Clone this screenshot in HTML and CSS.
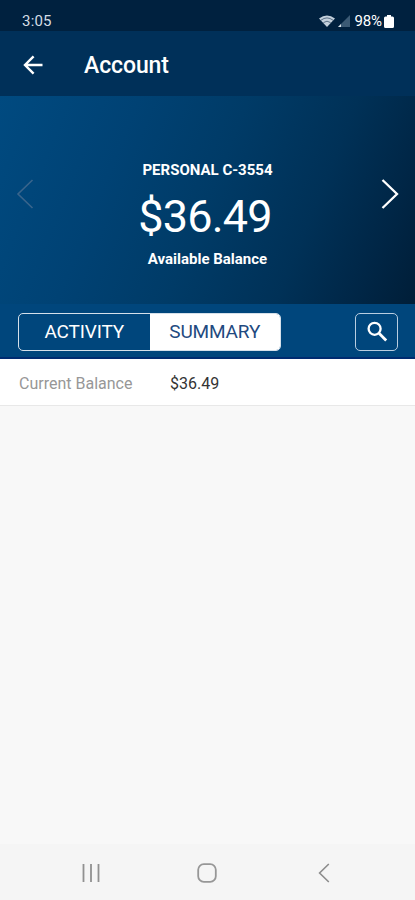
FILE: index.html
```html
<!DOCTYPE html>
<html lang="en">
<head>
  <meta charset="UTF-8" />
  <meta name="viewport" content="width=device-width, initial-scale=1.0"/>
  <title>Account</title>
  <link rel="stylesheet" href="styles.css">
</head>
<body>

<div class="status-bar">
  <span class="time">3:05</span>
  <div class="status-icons">
    <svg class="wifi" width="16" height="12" viewBox="0 0 16 12">
      <path d="M0 3.6 Q8 -2.8 16 3.6 L8 12 Z" fill="#c3d0dc"/>
      <path d="M2 5.2 Q8 0.6 14 5.2 M4.4 7.6 Q8 4.8 11.6 7.6" fill="none" stroke="#3d566e" stroke-width="0.8"/>
    </svg>
    <svg class="signal" width="12" height="12" viewBox="0 0 12 12">
      <path d="M12 0 V12 H0 Z" fill="#3b5a75"/>
      <path d="M3 9 V12 H0 Z" fill="#dbe4ec"/>
    </svg>
    <span class="percent">98%</span>
    <svg width="10" height="13" viewBox="0 0 10 13">
      <path d="M3 0 H7 V1.5 H8.5 Q10 1.5 10 3 V11.5 Q10 13 8.5 13 H1.5 Q0 13 0 11.5 V3 Q0 1.5 1.5 1.5 H3 Z" fill="#fff"/>
    </svg>
  </div>
</div>

<header>
  <svg width="20" height="20" viewBox="0 0 20 20" fill="none" stroke="#fff" stroke-width="2.4">
    <path d="M19.5 10 H2 M10.6 1.4 L2 10 L10.6 18.6"/>
  </svg>
  <h1>Account</h1>
</header>

<section class="balance-card">
  <svg class="prev" width="18" height="30" viewBox="0 0 18 30" fill="none" stroke="#39658c" stroke-width="1.6">
    <path d="M16.5 1 L2 15 L16.5 29"/>
  </svg>
  <div class="balance">
    <div class="account-name">PERSONAL C-3554</div>
    <div class="amount">$36.49</div>
    <div class="balance-label">Available Balance</div>
  </div>
  <svg class="next" width="18" height="30" viewBox="0 0 18 30" fill="none" stroke="#fff" stroke-width="2.3">
    <path d="M1.5 1 L16 15 L1.5 29"/>
  </svg>
</section>

<div class="toolbar">
  <div class="tabs">
    <button class="tab">ACTIVITY</button>
    <button class="tab active">SUMMARY</button>
  </div>
  <button class="search">
    <svg width="22" height="22" viewBox="0 0 22 22" fill="none" stroke="#fff">
      <circle cx="8.6" cy="7.8" r="6" stroke-width="2.3"/>
      <path d="M13 12.2 L20.2 19.4" stroke-width="2.8"/>
    </svg>
  </button>
</div>

<main>
  <div class="row">
    <span class="row-label">Current Balance</span>
    <span class="row-value">$36.49</span>
  </div>
</main>

<nav>
  <svg width="18" height="18" viewBox="0 0 18 18" stroke="#919191" stroke-width="1.8">
    <path d="M1.5 0 V18 M9 0 V18 M16.5 0 V18"/>
  </svg>
  <svg class="home" width="20" height="20" viewBox="0 0 20 20" fill="none" stroke="#979797" stroke-width="1.8">
    <rect x="1.2" y="1.2" width="17.6" height="17.6" rx="5.6"/>
  </svg>
  <svg width="12" height="20" viewBox="0 0 12 20" fill="none" stroke="#8c8c8c" stroke-width="1.6">
    <path d="M10.8 1 L1.6 10 L10.8 19"/>
  </svg>
</nav>

</body>
</html>
```
FILE: styles.css
```css
* {
  box-sizing: border-box;
}

body {
  font-family: Roboto, sans-serif;
  margin: 0;
  height: 900px;
  display: flex;
  flex-direction: column;
  background: #f8f8f8;
  color: #fff;
}

svg {
  display: block;
  flex-shrink: 0;
}

button {
  font-family: inherit;
  padding: 0;
  border: none;
  background: none;
  color: #fff;
}

.status-bar {
  height: 31px;
  padding: 11px 21px 0 22px;
  display: flex;
  justify-content: space-between;
  align-items: center;
  background: #00213f;
  font-size: 15px;
  line-height: 20px;
}

.time {
  color: #d5dde5;
  letter-spacing: 0.2px;
}

.status-icons {
  display: flex;
  align-items: center;
}

.signal {
  margin: 0 4px 0 3px;
}

.percent {
  margin-right: 2px;
  letter-spacing: -0.1px;
}

header {
  height: 65px;
  padding: 2px 23px 0;
  display: flex;
  align-items: center;
  gap: 41px;
  background: #003059;
}

header h1 {
  margin: 2px 0 0;
  font-size: 23px;
  font-weight: 500;
  letter-spacing: -0.1px;
}

.balance-card {
  height: 208px;
  padding: 0 16px 12px;
  display: flex;
  justify-content: space-between;
  align-items: center;
  background: linear-gradient(112deg, #004a80 0%, #004274 28%, #003b67 50%, #003157 72%, #002646 88%, #001e38 100%);
}

.balance {
  padding: 40px 0 0;
  text-align: center;
}

.account-name {
  font-size: 15px;
  font-weight: 700;
  line-height: 20px;
}

.amount {
  margin: 10px 5px 5px 0;
  font-size: 45px;
  line-height: 54px;
  letter-spacing: -0.8px;
}

.balance-label {
  font-size: 15px;
  font-weight: 700;
  line-height: 20px;
}

.toolbar {
  height: 55px;
  padding: 2px 17px 0 18px;
  display: flex;
  justify-content: space-between;
  align-items: center;
  background: #00467c;
  border-bottom: 2px solid #002b70;
}

.tabs {
  width: 263px;
  height: 38px;
  display: flex;
  border: 1.5px solid #d5e0ea;
  border-radius: 5px;
  overflow: hidden;
}

.tab {
  flex: 1;
  font-size: 19px;
  letter-spacing: -0.15px;
}

.tab.active {
  background: #fff;
  color: #1f4a80;
}

.search {
  width: 43px;
  height: 38px;
  display: flex;
  align-items: center;
  justify-content: center;
  border: 1.5px solid #b9cde0;
  border-radius: 5px;
}

main {
  flex: 1;
}

.row {
  height: 47px;
  padding: 2px 0 0 19px;
  display: flex;
  align-items: center;
  background: #fff;
  border-bottom: 1px solid #e8e8e8;
  font-size: 16px;
}

.row-label {
  width: 151px;
  color: #979797;
}

.row-value {
  color: #333;
}

nav {
  height: 56px;
  padding: 2px 85px 0 82px;
  display: flex;
  justify-content: space-between;
  align-items: center;
  background: #f5f5f5;
}

.home {
  margin-right: 4px;
}
```
